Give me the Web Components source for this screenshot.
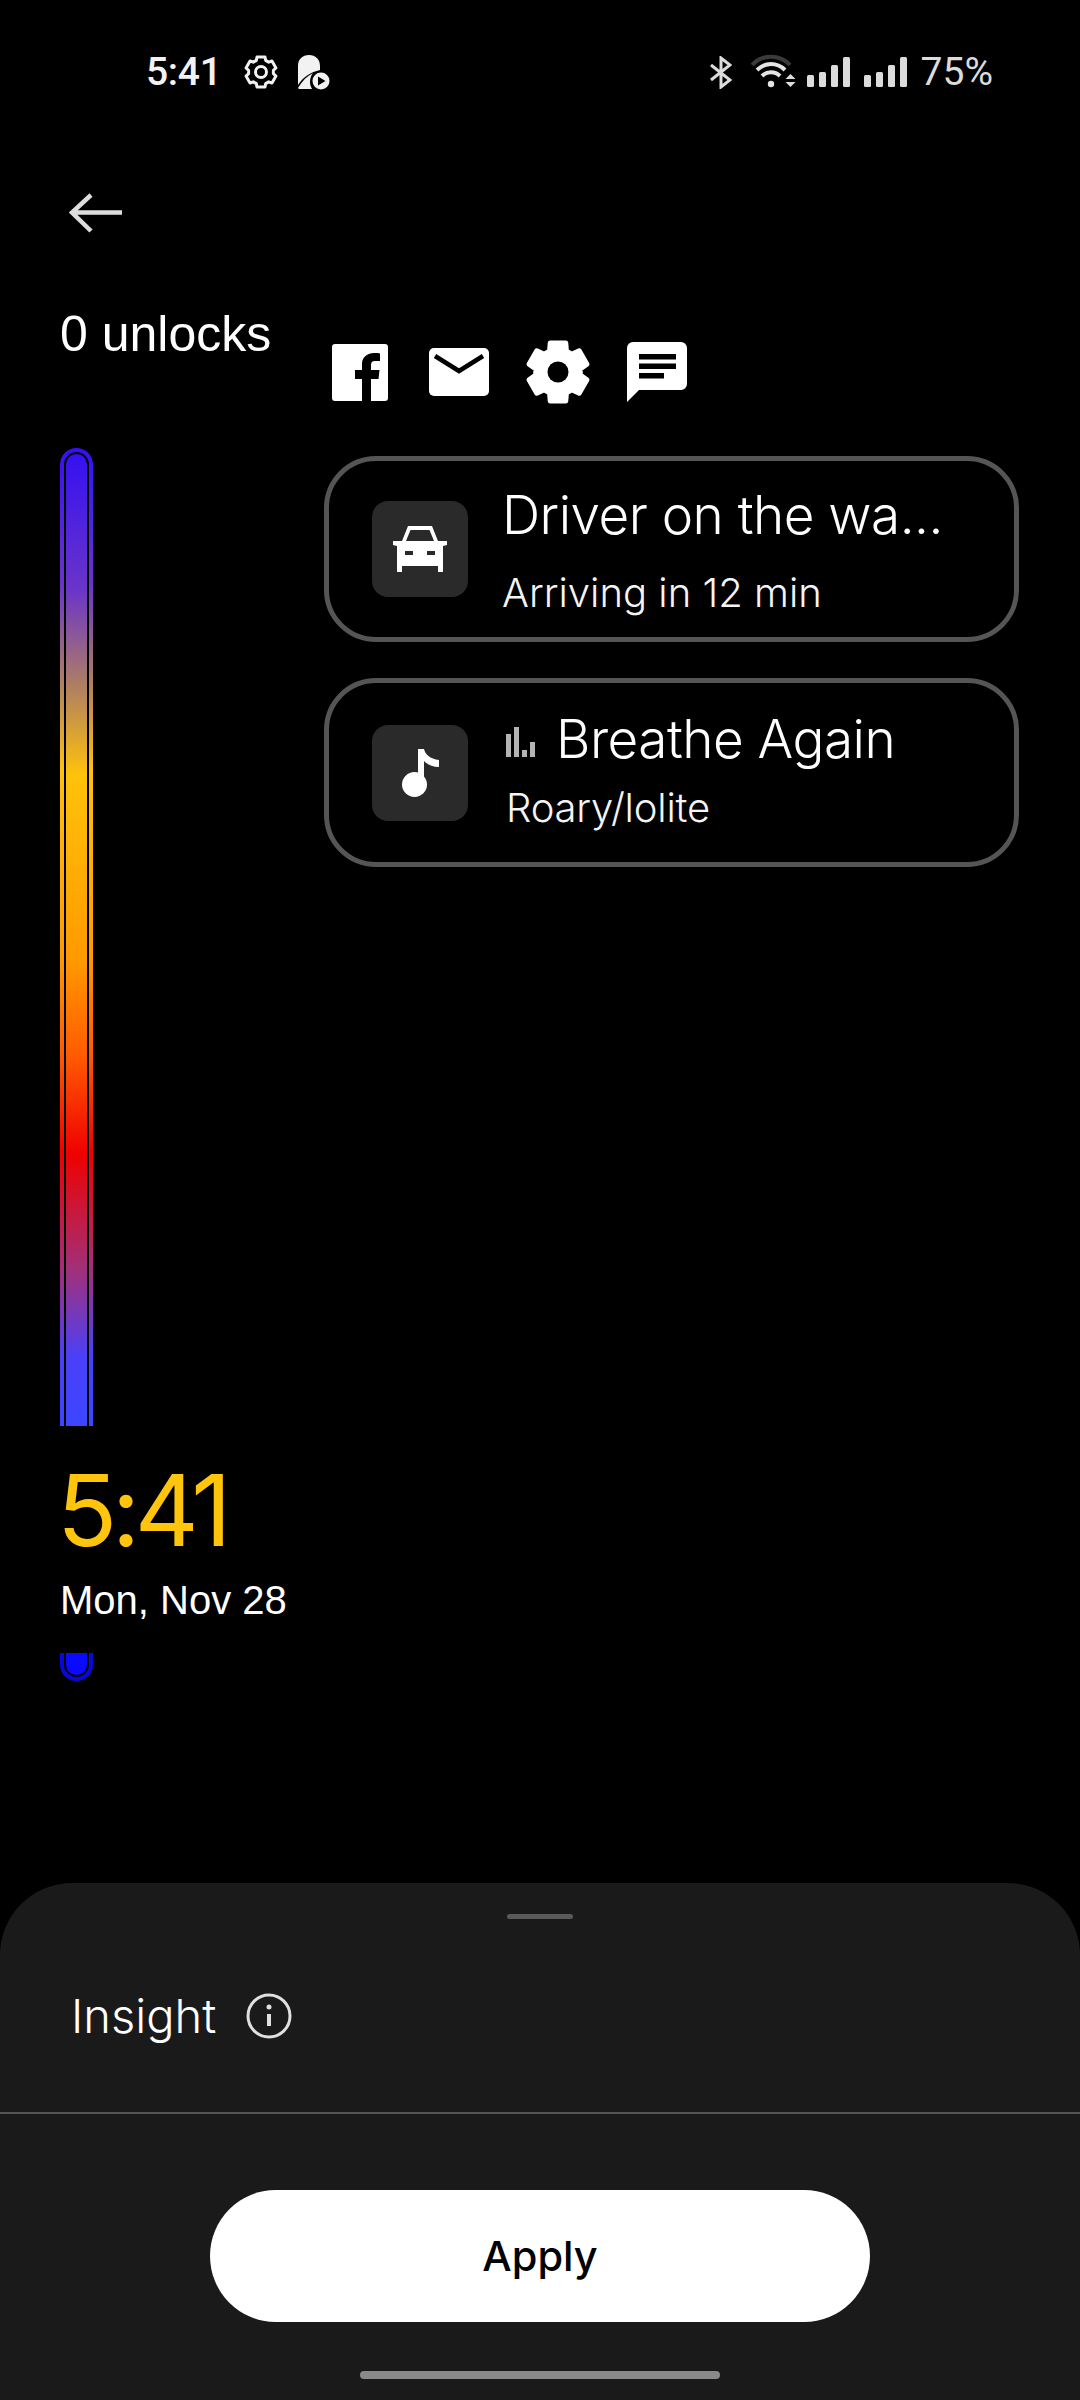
<!DOCTYPE html>
<html lang="en">
<head>
<meta charset="utf-8">
<title>Insight</title>
<style>
  html, body { margin: 0; padding: 0; background: #000; }
  body { width: 1080px; height: 2400px; overflow: hidden; font-family: Inter, "Liberation Sans", sans-serif; color: #fff; }
</style>
</head>
<body>
<lock-preview></lock-preview>

<script>
// six lobed gear outline, drawn round the centre of a size x size box
function gearPath(size, outer, valley) {
  const c = size / 2;
  const pts = [];
  for (let i = 0; i < 6; i++) {
    const a = -90 + i * 60;
    [[outer, a - 15], [outer, a + 15], [valley, a + 22], [valley, a + 38]].forEach(([r, deg]) => {
      const t = deg * Math.PI / 180;
      pts.push((c + r * Math.cos(t)).toFixed(2) + ' ' + (c + r * Math.sin(t)).toFixed(2));
    });
  }
  return 'M' + pts.join('L') + 'Z';
}

class StatusBar extends HTMLElement {
  constructor() {
    super();
    this.attachShadow({ mode: 'open' });
    this.shadowRoot.innerHTML = `
    <style>
      :host { display: flex; align-items: center; height: 144px; padding: 0 87px 0 146px; box-sizing: border-box; font-family: Roboto, sans-serif; }
      .time { font-size: 39px; font-weight: 500; color: #f2f2f2; width: 97px; letter-spacing: -.3px; }
      .pct { font-size: 39px; color: #dcdcdc; margin-left: 14px; }
      .right { margin-left: auto; display: flex; align-items: center; }
      svg { display: block; }
    </style>
    <span class="time">5:41</span>
    <svg width="36" height="36" viewBox="0 0 36 36" fill="none" stroke="#f2f2f2" stroke-width="3" stroke-linejoin="round"><path d="${gearPath(36, 15.5, 12.5)}"/><circle cx="18" cy="18" r="5.500"/></svg>
    <svg style="margin-left:18px" width="34" height="36" viewBox="0 0 34 36">
      <path fill="#f2f2f2" d="M1 12C1 5 5.500 1 12 1s11 4 11 11v4C14 18 6 23 1 31z"/>
      <path fill="#f2f2f2" d="M1 34c4-7 9-12 15-15-2 2-3 6-3 9 0 3 1 5 2 7H3c-1 0-2-.5-2-1z"/>
      <circle cx="24" cy="27" r="8.500" fill="#f2f2f2"/><path d="M21 22.500v9l7.500-4.500z" fill="#000"/>
    </svg>
    <div class="right">
      <svg width="22" height="33" viewBox="0 0 22 33" fill="none" stroke="#dcdcdc" stroke-width="3"><path d="M1 9l19 15-9 7V2l9 7L1 24"/></svg>
      <svg style="margin-left:19px" width="46" height="36" viewBox="0 0 46 36">
        <path d="M1 11C11 0 29 0 39 11" fill="none" stroke="#3a3a3a" stroke-width="4"/>
        <path d="M6 16c8-8 20-8 28 0M11 22c5-5 13-5 18 0" fill="none" stroke="#e4e4e4" stroke-width="4"/>
        <circle cx="20" cy="30" r="3.200" fill="#e4e4e4"/>
        <path d="M34.500 25l5-5 5 5zM34.500 28l5 5 5-5z" fill="#dcdcdc"/>
      </svg>
      <signal-bars style="margin-left:10px"></signal-bars>
      <signal-bars style="margin-left:14px"></signal-bars>
      <span class="pct">75%</span>
    </div>`;
  }
}

class SignalBars extends HTMLElement {
  constructor() {
    super();
    this.attachShadow({ mode: 'open' });
    this.shadowRoot.innerHTML = `
    <style>
      :host { display: flex; align-items: flex-end; gap: 5px; height: 30px; }
      i { display: block; width: 7px; background: #dcdcdc; border-radius: 1.500px; }
    </style>
    <i style="height:12px"></i><i style="height:15px"></i><i style="height:22px"></i><i style="height:30px"></i>`;
  }
}

class SideRail extends HTMLElement {
  constructor() {
    super();
    this.attachShadow({ mode: 'open' });
    this.shadowRoot.innerHTML = `
    <style>
      :host { display: flex; flex-direction: column; width: 264px; padding-left: 60px; box-sizing: content-box; font-family: "Liberation Sans", sans-serif; }
      .label { font-size: 50px; line-height: 88px; white-space: nowrap; }
      .track { --grad: linear-gradient(#3510f2 0%, #6a35c8 14%, #b08060 24%, #ffc20a 33%, #ff9a00 52%, #ff5a00 62%, #f00000 72%, #a0307a 84%, #4a40f8 93%, #3c46ff 100%);
        width: 33px; height: 978px; margin-top: 70px; box-sizing: border-box; padding: 4px 4px 0; border-radius: 17px 17px 0 0; background: var(--grad); }
      .gap { height: 100%; box-sizing: border-box; padding: 2px 2px 0; background: #000; border-radius: 13px 13px 0 0; }
      .fill { height: 100%; border-radius: 11px 11px 0 0; background: var(--grad); }
      .clock { font-family: Inter, sans-serif; font-size: 99px; font-weight: 400; line-height: 100px; color: #ffc50d; margin: 34px 0 0 -3px; letter-spacing: -5.500px; white-space: nowrap; }
      .date { font-size: 40px; line-height: 50px; margin-top: 15px; white-space: nowrap; }
      .cap { width: 33px; height: 28px; margin-top: 28px; box-sizing: border-box; padding: 0 4px 4px; border-radius: 0 0 17px 17px; background: #0808d8; }
      .cap .gap { padding: 0 2px 2px; border-radius: 0 0 13px 13px; }
      .cap .fill { border-radius: 0 0 11px 11px; background: #0a0aff; }
    </style>
    <div class="label">0 unlocks</div>
    <div class="track"><div class="gap"><div class="fill"></div></div></div>
    <div class="clock">5:41</div>
    <div class="date">Mon, Nov 28</div>
    <div class="cap"><div class="gap"><div class="fill"></div></div></div>`;
  }
}

class AppIcons extends HTMLElement {
  constructor() {
    super();
    this.attachShadow({ mode: 'open' });
    this.shadowRoot.innerHTML = `
    <style>
      :host { display: flex; align-items: center; height: 66px; padding-left: 8px; }
      svg { display: block; flex: none; }
    </style>
    <svg width="56" height="57" viewBox="0 0 56 57"><path fill="#fff" d="M3 0h50a3 3 0 0 1 3 3v51a3 3 0 0 1-3 3H39V35h7.500l1-9H39v-5c0-2.600 1-4 4-4h5V9.500c-1-.2-3.500-.4-6-.4-6.500 0-12 4-12 11V26h-7v9h7v22H3a3 3 0 0 1-3-3V3a3 3 0 0 1 3-3z"/></svg>
    <svg style="margin-left:41px" width="60" height="48" viewBox="0 0 60 48"><path fill="#fff" d="M5 0h50a5 5 0 0 1 5 5v38a5 5 0 0 1-5 5H5a5 5 0 0 1-5-5V5a5 5 0 0 1 5-5z"/><path fill="none" stroke="#000" stroke-width="4.500" d="M6 8l24 15L54 8"/></svg>
    <svg style="margin-left:36px" width="66" height="66" viewBox="0 0 66 66"><path fill="#fff" stroke="#fff" stroke-width="5" stroke-linejoin="round" d="${gearPath(66, 30, 22.500)}"/><circle cx="33" cy="33" r="10.500" fill="#000"/></svg>
    <svg style="margin-left:36px" width="60" height="60" viewBox="0 0 60 60"><path fill="#fff" d="M6 0h48a6 6 0 0 1 6 6v36a6 6 0 0 1-6 6H12L0 60V6a6 6 0 0 1 6-6z"/><path fill="#000" d="M12 12h37v5.500H12zM12 21.500h37V27H12zM12 31h25v5.500H12z"/></svg>`;
  }
}

class NotifCard extends HTMLElement {
  constructor() {
    super();
    this.attachShadow({ mode: 'open' });
    this.shadowRoot.innerHTML = `
    <style>
      :host { display: flex; align-items: center; width: 695px; box-sizing: border-box; border: 5px solid #555; border-radius: 52px; padding-left: 43px; background: #000; }
      .icon { flex: none; display: flex; align-items: center; justify-content: center; width: 96px; height: 96px; border-radius: 16px; background: #2a2a2a; }
      .text { margin-left: var(--text-gap, 34px); display: flex; flex-direction: column; font-weight: 300; white-space: nowrap; }
      ::slotted([slot=title]) { font-size: 53px; letter-spacing: -.5px; line-height: var(--title-line, 88px); }
      ::slotted([slot=sub]) { font-size: 40px; letter-spacing: var(--sub-track, 0); line-height: var(--sub-line, 68px); color: #f4f4f4; }
    </style>
    <div class="icon"><slot name="icon"></slot></div>
    <div class="text"><slot name="title"></slot><slot name="sub"></slot></div>`;
  }
}

class BottomSheet extends HTMLElement {
  constructor() {
    super();
    this.attachShadow({ mode: 'open' });
    this.shadowRoot.innerHTML = `
    <style>
      :host { display: flex; flex-direction: column; height: 517px; background: #1a1a1a; border-radius: 72px 72px 0 0; box-sizing: border-box; }
      .handle { width: 66px; height: 5px; border-radius: 3px; background: #5a5a5a; margin: 31px auto 0; }
      .row { display: flex; align-items: center; height: 193px; padding-left: 71px; box-sizing: border-box; }
      .row span { font-size: 47px; font-weight: 350; }
      .row svg { margin-left: 30px; display: block; }
      hr { margin: 0; border: 0; height: 2px; background: #555; }
      .btn { display: flex; align-items: center; justify-content: center; width: 660px; height: 132px; margin: 76px auto 0; border-radius: 66px; background: #fff; color: #000; font-size: 41.500px; font-weight: 450; }
      .home { width: 360px; height: 8px; border-radius: 4px; background: #8a8a8a; margin: 49px auto 0; }
    </style>
    <div class="handle"></div>
    <div class="row">
      <span>Insight</span>
      <svg width="46" height="46" viewBox="0 0 46 46" fill="none" stroke="#e0e0e0"><circle cx="23" cy="23" r="21" stroke-width="3"/><path d="M23 21v12" stroke-width="4"/><circle cx="23" cy="14" r="2.500" fill="#e0e0e0" stroke="none"/></svg>
    </div>
    <hr>
    <div class="btn">Apply</div>
    <div class="home"></div>`;
  }
}

class LockPreview extends HTMLElement {
  constructor() {
    super();
    this.attachShadow({ mode: 'open' });
    this.shadowRoot.innerHTML = `
    <style>
      :host { display: flex; flex-direction: column; height: 2400px; background: #000; color: #fff; }
      .back { height: 146px; padding: 49px 0 0 69px; box-sizing: border-box; }
      .back svg { display: block; }
      main { display: flex; flex: 1; min-height: 0; }
      .right { display: flex; flex-direction: column; padding-top: 49px; }
      notif-card { flex: none; }
      .title { display: flex; align-items: center; }
      .sub { display: block; }
      .bars { display: flex; align-items: flex-end; gap: 3px; width: 31px; margin-right: 19px; height: 30px; margin-top: 5px; }
      .bars i { display: block; width: 5px; background: #b4b4b4; }
      bottom-sheet { flex: none; }
    </style>
    <status-bar></status-bar>
    <div class="back"><svg width="54" height="40" viewBox="0 0 54 40" fill="none" stroke="#ddd" stroke-width="4.500"><path d="M53 19.500H3M22 2L3 19.500 22 38"/></svg></div>
    <main>
      <side-rail></side-rail>
      <div class="right">
        <app-icons></app-icons>
        <notif-card style="margin-top:51px;height:186px">
          <svg slot="icon" width="54" height="46" viewBox="0 0 54 46"><path fill="#fff" fill-rule="evenodd" d="M15 0h24l6 15h9v4l-4 1v26h-5v-6H9v6H4V20l-4-1v-4h9zM17.500 4L13 15h28L36.500 4zM12 25v4h8v-4zM34 25v4h8v-4z"/></svg>
          <span slot="title" class="title">Driver on the wa...</span>
          <span slot="sub" class="sub">Arriving in 12 min</span>
        </notif-card>
        <notif-card style="margin-top:36px;height:189px;--title-line:71px;--sub-line:66px;--sub-track:-.2px;--text-gap:38px">
          <svg slot="icon" width="37" height="48" viewBox="0 0 37 48"><circle cx="12.500" cy="35.500" r="12.500" fill="#fff"/><path fill="#fff" d="M16 0h6c1 5 6 10 15 11v7c-6 0-11-2-15-6v24h-6z"/></svg>
          <span slot="title" class="title"><span class="bars"><i style="height:23px"></i><i style="height:30px"></i><i style="height:7px"></i><i style="height:15px"></i></span>Breathe Again</span>
          <span slot="sub" class="sub">Roary/lolite</span>
        </notif-card>
      </div>
    </main>
    <bottom-sheet></bottom-sheet>`;
  }
}

customElements.define('status-bar', StatusBar);
customElements.define('signal-bars', SignalBars);
customElements.define('side-rail', SideRail);
customElements.define('app-icons', AppIcons);
customElements.define('notif-card', NotifCard);
customElements.define('bottom-sheet', BottomSheet);
customElements.define('lock-preview', LockPreview);
</script>
</body>
</html>
